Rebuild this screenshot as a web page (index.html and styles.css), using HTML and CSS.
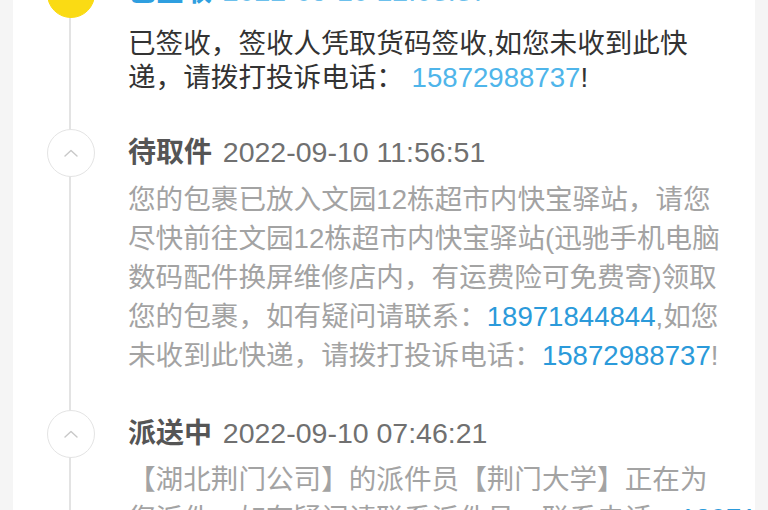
FILE: index.html
```html
<!DOCTYPE html>
<html lang="zh-CN">
<head>
<meta charset="utf-8">
<title>物流跟踪</title>
<link rel="stylesheet" href="styles.css">
</head>
<body>
<div class="card">
  <div class="list">
    <div class="item item-done">
      <div class="node">
        <span class="dot dot-active">
          <svg width="20" height="20" viewBox="0 0 20 20"><path d="M5 10 L9 14 L15 6" fill="none" stroke="#5a4a00" stroke-width="2.2" stroke-linecap="round" stroke-linejoin="round"/></svg>
        </span>
      </div>
      <div class="content">
        <div class="title title-active"><b class="status status-active">已签收</b> <span class="time time-active">2022-09-10 12:03:37</span></div>
        <p class="desc desc-active">已签收，签收人凭取货码签收,如您未收到此快<br>递，请拨打投诉电话： <a class="tel tel-light">15872988737</a>!</p>
      </div>
    </div>
    <div class="item">
      <div class="node">
        <span class="dot">
          <svg width="16" height="10" viewBox="0 0 16 10"><path d="M2 8 L8 2.5 L14 8" fill="none" stroke="#c8c8c8" stroke-width="1.4" stroke-linecap="round" stroke-linejoin="round"/></svg>
        </span>
      </div>
      <div class="content">
        <div class="title"><b class="status">待取件</b> <span class="time">2022-09-10 11:56:51</span></div>
        <p class="desc">您的包裹已放入文园12栋超市内快宝驿站，请您<br>尽快前往文园12栋超市内快宝驿站(迅驰手机电脑<br>数码配件换屏维修店内，有运费险可免费寄)领取<br>您的包裹，如有疑问请联系：<a class="tel">18971844844</a>,如您<br>未收到此快递，请拨打投诉电话：<a class="tel">15872988737</a>!</p>
      </div>
    </div>
    <div class="item">
      <div class="node">
        <span class="dot">
          <svg width="16" height="10" viewBox="0 0 16 10"><path d="M2 8 L8 2.5 L14 8" fill="none" stroke="#c8c8c8" stroke-width="1.4" stroke-linecap="round" stroke-linejoin="round"/></svg>
        </span>
      </div>
      <div class="content">
        <div class="title"><b class="status">派送中</b> <span class="time">2022-09-10 07:46:21</span></div>
        <p class="desc">【湖北荆门公司】的派件员【荆门大学】正在为<br>您派件，如有疑问请联系派件员，联系电话：<a class="tel">18971844844</a></p>
      </div>
    </div>
  </div>
</div>
</body>
</html>
```

FILE: styles.css
```css
html, body {
  margin: 0;
  padding: 0;
}
body {
  background: #f5f5f5;
  font-family: "Liberation Sans", "Noto Sans CJK SC", sans-serif;
  width: 768px;
  height: 510px;
  overflow: hidden;
}
.card {
  margin-left: 13px;
  width: 742px;
  height: 510px;
  overflow: hidden;
  background: linear-gradient(#e3e3e3, #e3e3e3) 56px 0 / 2px 100% no-repeat, #ffffff;
}
.list {
  margin-top: -24px;
}
.item {
  display: flex;
  padding-bottom: 38px;
}
.item-done {
  padding-bottom: 37px;
}
.node {
  width: 115px;
  flex: none;
  display: flex;
  align-items: flex-start;
}
.dot {
  margin-left: 34px;
  margin-top: -3px;
  width: 46px;
  height: 46px;
  border: 1px solid #e4e4e4;
  border-radius: 50%;
  background: #fff;
  display: flex;
  align-items: center;
  justify-content: center;
}
.dot-active {
  margin-top: -6px;
  background: #fadb14;
  border-color: #fadb14;
}
.content {
  flex: 1;
  min-width: 0;
}
.title {
  font-size: 28px;
  line-height: 40px;
  height: 40px;
  white-space: nowrap;
  color: #666;
}
.title-active {
  margin-top: -5px;
}
.status {
  font-weight: bold;
  color: #555;
}
.status-active {
  color: #2f9fe0;
}
.time {
  font-size: 28.5px;
  margin-left: 3px;
  color: #707070;
}
.time-active {
  color: #6cc0ec;
}
.desc {
  margin: 7.5px 0 0;
  font-size: 27.6px;
  line-height: 39px;
  color: #a3a3a3;
  white-space: nowrap;
}
.desc-active {
  margin-top: 16px;
  color: #333;
  line-height: 34px;
}
.tel {
  color: #2b9ada;
}
.tel-light {
  color: #4fb5ea;
}
```
